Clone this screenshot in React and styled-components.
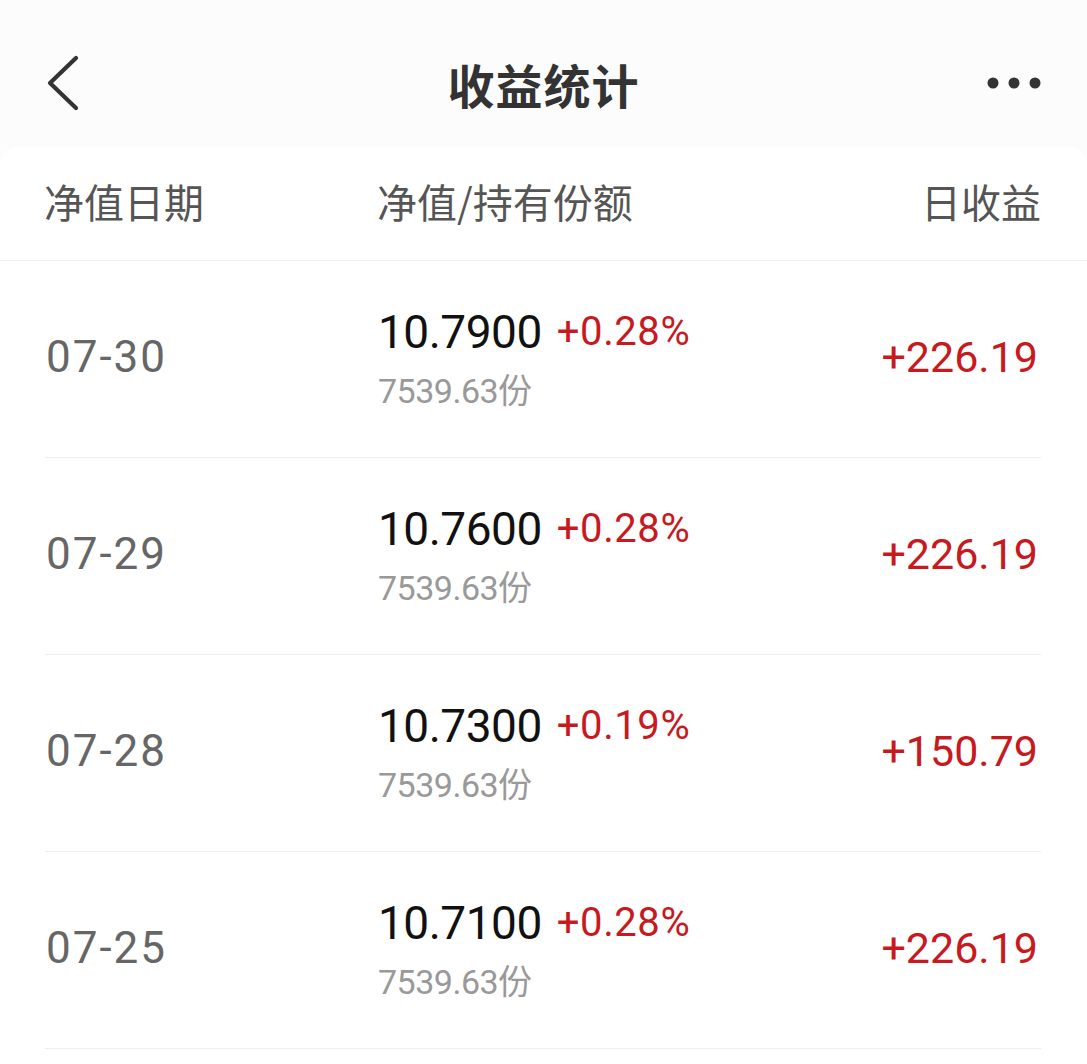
import React from "react";
import styled, { createGlobalStyle } from "styled-components";

const GlobalStyle = createGlobalStyle`
  body {
    margin: 0;
    background: #fcfcfc;
    font-family: Roboto, "Noto Sans CJK SC", sans-serif;
  }
`;

const Page = styled.div`
  width: 1087px;
  min-height: 1064px;
  background: #fcfcfc;
`;

const TopBar = styled.header`
  height: 147px;
  display: grid;
  grid-template-columns: 1fr auto 1fr;
  align-items: center;
  padding: 19px 44px 0 40px;
  box-sizing: border-box;
`;

const IconButton = styled.button`
  border: 0;
  background: none;
  padding: 0;
  display: flex;
  align-items: center;
  justify-content: center;
  width: ${props => props.size}px;
  height: 60px;
  justify-self: ${props => (props.end ? "end" : "start")};
`;

const Title = styled.h1`
  margin: 0 0 0 4px;
  font-family: "Noto Sans CJK SC", sans-serif;
  font-size: 47px;
  font-weight: 700;
  color: #333;
  letter-spacing: 1px;
`;

const Card = styled.section`
  background: #fff;
  border-radius: 18px 18px 0 0;
  min-height: 917px;
`;

const HeadRow = styled.div`
  display: grid;
  grid-template-columns: 333px 1fr auto;
  align-items: center;
  height: 114px;
  padding: 0 46px 6px 44px;
  box-sizing: border-box;
  border-bottom: 1px solid #eeeeee;
`;

const HeadCell = styled.div`
  font-family: "Noto Sans CJK SC", sans-serif;
  font-size: 40px;
  color: #555;
  text-align: ${props => (props.right ? "right" : "left")};
`;

const Row = styled.div`
  display: grid;
  grid-template-columns: 333px 1fr auto;
  align-items: center;
  height: 196px;
  margin: 0 46px 0 45px;
  border-bottom: 1px solid #eeeeee;
`;

const DateCell = styled.div`
  font-size: 44px;
  color: #666;
  padding: 0 0 4px 1px;
  letter-spacing: 2px;
`;

const NavCell = styled.div`
  display: flex;
  flex-direction: column;
  gap: 6px;
  margin-top: 2px;
`;

const NavLine = styled.div`
  display: flex;
  align-items: baseline;
  gap: 15px;
`;

const NavValue = styled.span`
  font-size: 46px;
  line-height: 1.1;
  color: #111;
  letter-spacing: -0.5px;
`;

const Change = styled.span`
  font-size: 40px;
  color: #c8191e;
  position: relative;
  top: -3px;
  letter-spacing: 0.6px;
`;

const Shares = styled.span`
  font-size: 34px;
  color: #999;
  letter-spacing: -0.5px;
`;

const Income = styled.div`
  font-size: 43px;
  color: #c8191e;
  text-align: right;
  padding: 0 3px 4px 0;
`;

const records = [
  { date: "07-30", nav: "10.7900", change: "+0.28%", shares: "7539.63份", income: "+226.19" },
  { date: "07-29", nav: "10.7600", change: "+0.28%", shares: "7539.63份", income: "+226.19" },
  { date: "07-28", nav: "10.7300", change: "+0.19%", shares: "7539.63份", income: "+150.79" },
  { date: "07-25", nav: "10.7100", change: "+0.28%", shares: "7539.63份", income: "+226.19" },
];

export default function App() {
  return (
    <Page>
      <GlobalStyle />
      <TopBar>
        <IconButton size={44} aria-label="back">
          <svg width="40" height="60" viewBox="0 0 40 60">
            <path
              d="M34 5 L8 30 L34 55"
              fill="none"
              stroke="#333"
              strokeWidth="4.2"
              strokeLinecap="round"
              strokeLinejoin="round"
            />
          </svg>
        </IconButton>
        <Title>收益统计</Title>
        <IconButton size={56} end aria-label="more">
          <svg width="56" height="20" viewBox="0 0 56 20">
            <circle cx="6" cy="10" r="5.5" fill="#333" />
            <circle cx="27" cy="10" r="5.5" fill="#333" />
            <circle cx="48" cy="10" r="5.5" fill="#333" />
          </svg>
        </IconButton>
      </TopBar>
      <Card>
        <HeadRow>
          <HeadCell>净值日期</HeadCell>
          <HeadCell>净值/持有份额</HeadCell>
          <HeadCell right>日收益</HeadCell>
        </HeadRow>
        {records.map(r => (
          <Row key={r.date}>
            <DateCell>{r.date}</DateCell>
            <NavCell>
              <NavLine>
                <NavValue>{r.nav}</NavValue>
                <Change>{r.change}</Change>
              </NavLine>
              <Shares>{r.shares}</Shares>
            </NavCell>
            <Income>{r.income}</Income>
          </Row>
        ))}
      </Card>
    </Page>
  );
}
